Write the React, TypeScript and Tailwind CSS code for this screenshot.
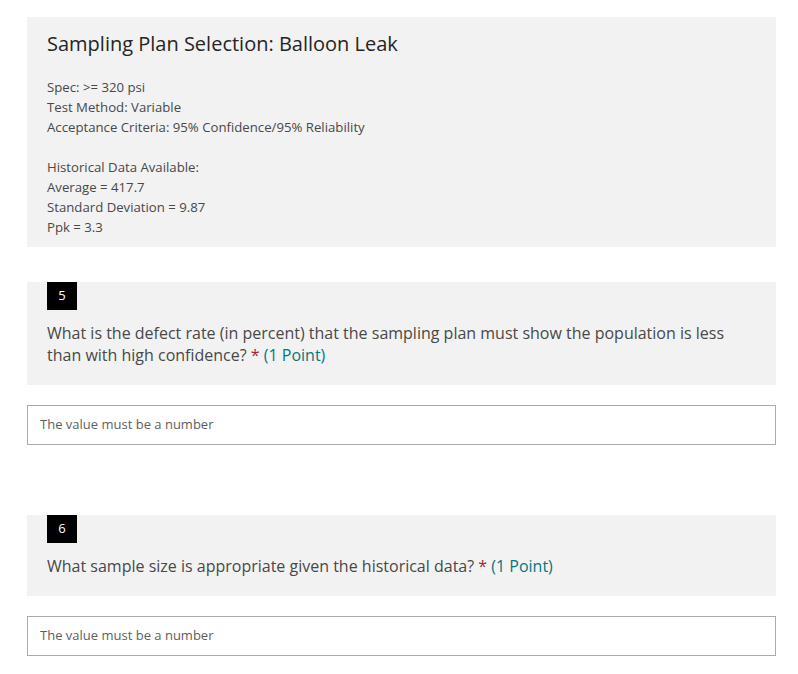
import React from "react";

const font = { fontFamily: '"Segoe UI", "Open Sans", "Noto Sans", sans-serif' };

function Question({ n, text }: { n: number; text: React.ReactNode }) {
  return (
    <>
      <div className="bg-[#f2f2f2] px-5 pb-[19px]">
        <div className="w-[30px] h-[28px] bg-black text-white text-[13px] flex items-center justify-center mt-[2px]">
          {n}
        </div>
        <div className="mt-[12px] text-[16px] leading-[22px] text-[#484848]">{text}</div>
      </div>
      <div className="mt-[20px] h-[40px] border border-[#ababab] bg-white flex items-center px-[12px] text-[13px] text-[#605e5c]">
        The value must be a number
      </div>
    </>
  );
}

export default function App() {
  return (
    <div className="w-[798px] min-h-[674px] bg-white pt-[17px] pl-[27px] pr-[22px]" style={font}>
      <div className="bg-[#f2f2f2] px-5 pt-[13px] pb-[10px]">
        <div className="text-[20px] leading-[28px] text-[#252525]">Sampling Plan Selection: Balloon Leak</div>
        <div className="mt-[19px] text-[13.2px] leading-[20px] text-[#484848]">
          <div>Spec: &gt;= 320 psi</div>
          <div>Test Method: Variable</div>
          <div>Acceptance Criteria: 95% Confidence/95% Reliability</div>
          <div>&nbsp;</div>
          <div>Historical Data Available:</div>
          <div>Average = 417.7</div>
          <div>Standard Deviation = 9.87</div>
          <div>Ppk = 3.3</div>
        </div>
      </div>
      <div className="mt-[35px]">
        <Question
          n={5}
          text={
            <>
              What is the defect rate (in percent) that the sampling plan must show the population is less than with high confidence?{" "}
              <span className="text-[#a4262c]">*</span> <span className="text-[#03787c]">(1 Point)</span>
            </>
          }
        />
      </div>
      <div className="mt-[70px]">
        <Question
          n={6}
          text={
            <>
              What sample size is appropriate given the historical data? <span className="text-[#a4262c]">*</span>{" "}
              <span className="text-[#03787c]">(1 Point)</span>
            </>
          }
        />
      </div>
    </div>
  );
}
